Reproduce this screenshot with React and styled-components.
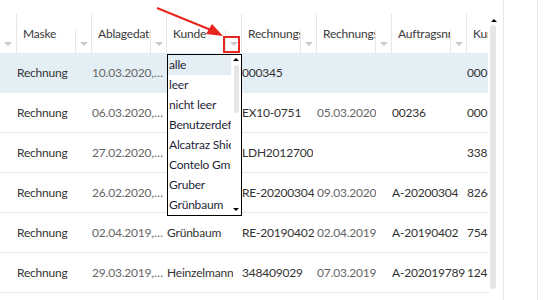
import React from "react";
import styled, { createGlobalStyle } from "styled-components";

const GlobalStyle = createGlobalStyle`
  html, body {
    margin: 0;
    padding: 0;
    background: #fff;
  }
  body {
    font-family: Lato, "Liberation Sans", sans-serif;
    font-size: 12px;
    letter-spacing: -0.2px;
  }
`;

const columns = [
  "Maske",
  "Ablagedatum",
  "Kunde",
  "Rechnungsnummer",
  "Rechnungsdatum",
  "Auftragsnr",
  "Kundennummer",
];

const rows = [
  ["Rechnung", "10.03.2020,09:12", "Alcatraz Shield", "000345", "", "", "000117"],
  ["Rechnung", "06.03.2020,14:40", "Contelo GmbH", "EX10-0751", "05.03.2020", "00236", "000231"],
  ["Rechnung", "27.02.2020,11:05", "Gruber", "LDH2012700", "", "", "338102"],
  ["Rechnung", "26.02.2020,16:22", "Grünbaum", "RE-20200304", "09.03.2020", "A-20200304", "826410"],
  ["Rechnung", "02.04.2019,08:51", "Grünbaum", "RE-20190402", "02.04.2019", "A-20190402", "754300"],
  ["Rechnung", "29.03.2019,10:33", "Heinzelmann", "348409029", "07.03.2019", "A-202019789124", "124508"],
];

const filterOptions = [
  "alle",
  "leer",
  "nicht leer",
  "Benutzerdefiniert",
  "Alcatraz Shield",
  "Contelo GmbH",
  "Gruber",
  "Grünbaum",
];

const Page = styled.div`
  position: relative;
  display: flex;
  width: 555px;
  height: 300px;
  overflow: hidden;
  background: #fff;
`;

const Grid = styled.div`
  width: 488px;
  flex-shrink: 0;
  overflow: hidden;
  padding-top: 14px;
`;

const HeaderRow = styled.div`
  display: flex;
  height: 39px;
`;

const HeadCell = styled.div`
  display: flex;
  flex-shrink: 0;
  width: ${(p) => (p.stub ? "16px" : "75px")};
  border-left: ${(p) => (p.stub ? "none" : "1px solid #e6e6e6")};
  box-sizing: border-box;
`;

const HeadLabel = styled.div`
  flex: 1;
  min-width: 0;
  overflow: hidden;
  white-space: nowrap;
  padding-left: 6px;
  align-self: center;
  color: #3a3a3a;
`;

const FilterButton = styled.div`
  flex-shrink: 0;
  align-self: flex-end;
  display: flex;
  align-items: center;
  justify-content: center;
  width: 16px;
  height: 23px;
  box-sizing: border-box;
  border-left: ${(p) => (p.plain ? "none" : "1px solid #e6e6e6")};
  padding-top: 5px;

  &::after {
    content: "";
    border-left: 4px solid transparent;
    border-right: 4px solid transparent;
    border-top: 4px solid #cacaca;
  }
`;

const Row = styled.div`
  display: flex;
  height: 40px;
  box-sizing: border-box;
  background: ${(p) => (p.selected ? "#e4eef5" : "#fff")};
  border-bottom: 1px solid ${(p) => (p.selected ? "#e4eef5" : "#e8e8e8")};
`;

const Cell = styled.div`
  flex-shrink: 0;
  width: ${(p) => (p.stub ? "16px" : "75px")};
  box-sizing: border-box;
  padding-left: ${(p) => (p.stub ? "0" : "1px")};
  display: flex;
  align-items: center;
  color: ${(p) => (p.muted ? "#666" : "#333")};
  overflow: hidden;
  white-space: nowrap;
`;

const CellText = styled.span`
  overflow: hidden;
  text-overflow: ${(p) => (p.ellipsis ? "ellipsis" : "clip")};
  white-space: nowrap;
  min-width: 0;
`;

const ScrollColumn = styled.div`
  width: 15px;
  flex-shrink: 0;
  display: flex;
  flex-direction: column;
  align-items: flex-start;
  padding: 19px 0 11px 2px;
  box-sizing: border-box;
`;

const ArrowUp = styled.div`
  margin-left: ${(p) => p.offset || 0}px;
  border-left: 3px solid transparent;
  border-right: 3px solid transparent;
  border-bottom: 3px solid #000;
`;

const ArrowDown = styled.div`
  margin-left: ${(p) => p.offset || 0}px;
  border-left: 3px solid transparent;
  border-right: 3px solid transparent;
  border-top: 3px solid #000;
`;

const Track = styled.div`
  flex: 1;
  width: 6px;
  margin-top: 3px;
  border-radius: 3px;
  background: #e6e6e6;
`;

const SidePanel = styled.div`
  width: 35px;
  flex-shrink: 0;
  box-sizing: border-box;
  border-left: 1px solid #e8e8e8;
  border-right: 1px solid #e8e8e8;
`;

const ListBox = styled.div`
  position: absolute;
  left: 167px;
  top: 54px;
  width: 75px;
  height: 162px;
  box-sizing: border-box;
  border: 1px solid #000;
  background: #fff;
  display: flex;
`;

const Options = styled.div`
  flex: 1;
  min-width: 0;
  overflow: hidden;
`;

const Option = styled.div`
  height: 20px;
  line-height: 20px;
  padding-left: 1px;
  white-space: nowrap;
  overflow: hidden;
  color: #1f1f3a;
  background: ${(p) => (p.active ? "#e4eef5" : "transparent")};
`;

const ListScroll = styled.div`
  width: 10px;
  flex-shrink: 0;
  display: flex;
  flex-direction: column;
  align-items: center;
  padding: 3px 0 4px;
  box-sizing: border-box;
`;

const ListThumb = styled.div`
  width: 5px;
  height: 48px;
  margin-top: 4px;
  border-radius: 3px;
  background: #e6e6e6;
`;

const Spacer = styled.div`
  flex: 1;
`;

const Marker = styled.div`
  position: absolute;
  left: 223px;
  top: 36px;
  width: 17px;
  height: 17px;
  box-sizing: border-box;
  border: 2px solid #e8261f;
`;

const Pointer = styled.svg`
  position: absolute;
  left: 0;
  top: 0;
  pointer-events: none;
`;

const mutedCols = [1, 4];

const App = () => {
  return (
    <Page>
      <GlobalStyle />
      <Grid>
        <HeaderRow>
          <HeadCell stub>
            <FilterButton plain />
          </HeadCell>
          {columns.map((c) => (
            <HeadCell key={c}>
              <HeadLabel>{c}</HeadLabel>
              <FilterButton />
            </HeadCell>
          ))}
        </HeaderRow>
        {rows.map((r, i) => (
          <Row key={i} selected={i === 0}>
            <Cell stub />
            {r.map((v, j) => (
              <Cell key={j} muted={mutedCols.includes(j)}>
                <CellText ellipsis={j === 1}>{v}</CellText>
              </Cell>
            ))}
          </Row>
        ))}
      </Grid>
      <ScrollColumn>
        <ArrowUp offset={1} />
        <Track />
      </ScrollColumn>
      <SidePanel />

      <ListBox>
        <Options>
          {filterOptions.map((o, i) => (
            <Option key={o} active={i === 0}>
              {o}
            </Option>
          ))}
        </Options>
        <ListScroll>
          <ArrowUp />
          <ListThumb />
          <Spacer />
          <ArrowDown />
        </ListScroll>
      </ListBox>

      <Marker />
      <Pointer width="555" height="300" viewBox="0 0 555 300">
        <line x1="157" y1="8" x2="211" y2="30" stroke="#e8261f" strokeWidth="2" />
        <polygon points="223,36 206,34 212,24" fill="#e8261f" />
      </Pointer>
    </Page>
  );
};

export default App;
